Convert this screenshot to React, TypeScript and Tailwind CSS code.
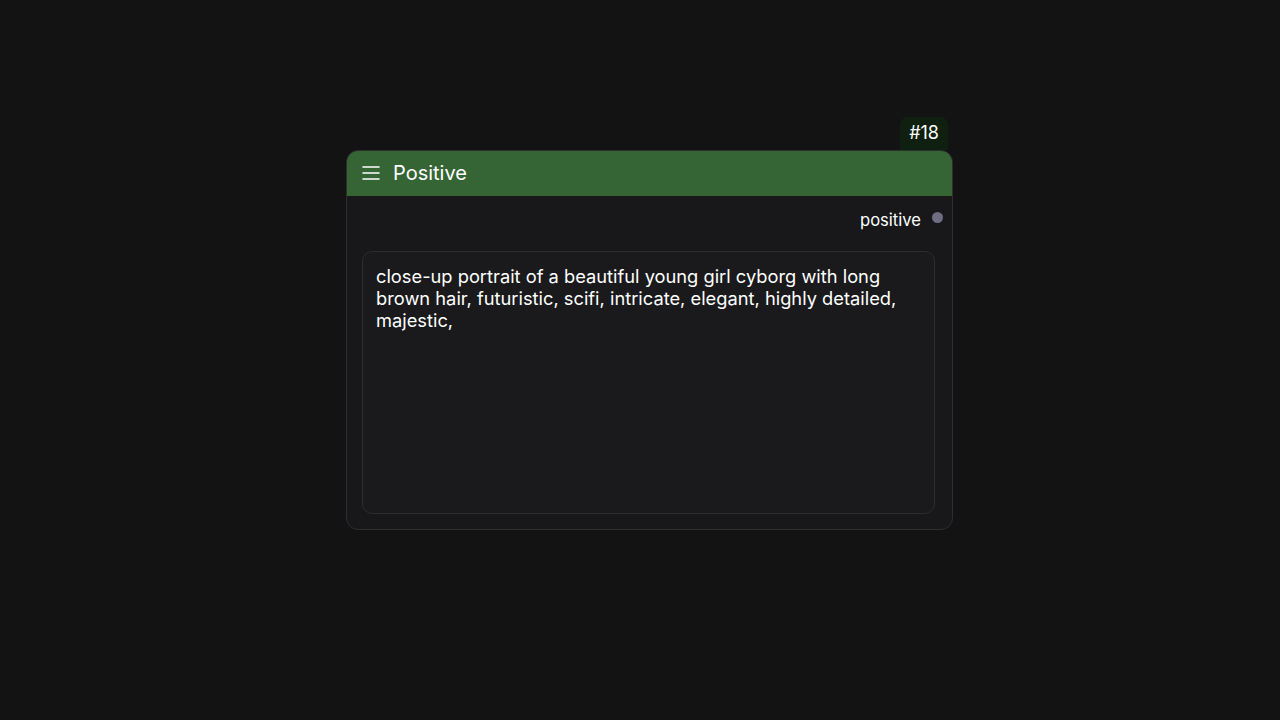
export default function App() {
  return (
    <div className="w-[1280px] h-[720px] bg-[#131313] font-['Inter',sans-serif] relative overflow-hidden">
      <div className="absolute left-[346px] top-[117px] w-[607px]">
        <div className="flex justify-end pr-[5px]">
          <span className="h-[33px] px-[9px] pb-[2px] flex items-center rounded-t-[8px] bg-[#0f1f10] text-white text-[18px]">
            #18
          </span>
        </div>
        <div className="h-[380px] rounded-[12px] border border-[#2e2e31] bg-[#18181a] overflow-hidden flex flex-col">
          <div className="h-[45px] bg-[#356535] flex items-center gap-[12px] px-[14px] pb-[1px] shrink-0">
            <svg width="20" height="20" viewBox="0 0 20 20" fill="none" stroke="#ffffff" strokeWidth="1.6" strokeLinecap="round">
              <path d="M2 4h16M2 10h16M2 16h16" />
            </svg>
            <span className="text-white text-[20px] leading-none">Positive</span>
          </div>
          <div className="flex justify-end items-center gap-[11px] pr-[9px] pt-[9px] h-[46px] shrink-0">
            <span className="text-white text-[16.6px] leading-none mb-[7px]">positive</span>
            <span className="w-[11px] h-[11px] rounded-full bg-[#6e6d82] mb-[12px]" />
          </div>
          <div className="flex-1 pl-[15px] pr-[17px] pb-[15px] pt-[9px] flex">
            <div className="flex-1 rounded-[10px] border border-[#2d2d30] bg-[#1a1a1c] px-[13px] pt-[13px] text-white text-[18.3px] leading-[22px]">
              close-up portrait of a beautiful young girl cyborg with long brown hair, futuristic, scifi, intricate, elegant, highly detailed, majestic,
            </div>
          </div>
        </div>
      </div>
    </div>
  );
}
